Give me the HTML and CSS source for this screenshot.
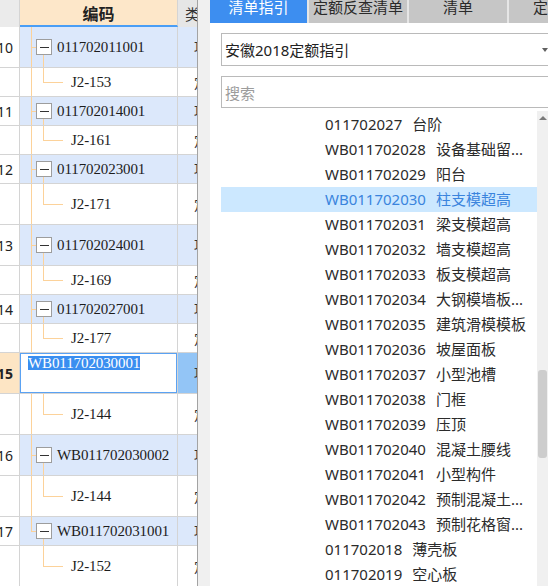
FILE: index.html
```html
<!DOCTYPE html>
<html lang="zh-CN">
<head>
<meta charset="utf-8">
<title>清单指引</title>
<link rel="stylesheet" href="styles.css">
</head>
<body>
<div class="app">
  <div class="grid">
    <div class="row head">
      <div class="num"></div>
      <div class="code">编码</div>
      <div class="type">类</div>
    </div>

    <div class="row tall">
      <div class="num">10</div>
      <div class="code p"><span class="box"></span>011702011001</div>
      <div class="type p">项</div>
    </div>
    <div class="row">
      <div class="num"></div>
      <div class="code c">J2-153</div>
      <div class="type">定</div>
    </div>

    <div class="row">
      <div class="num">11</div>
      <div class="code p"><span class="box"></span>011702014001</div>
      <div class="type p">项</div>
    </div>
    <div class="row">
      <div class="num"></div>
      <div class="code c">J2-161</div>
      <div class="type">定</div>
    </div>

    <div class="row">
      <div class="num">12</div>
      <div class="code p"><span class="box"></span>011702023001</div>
      <div class="type p">项</div>
    </div>
    <div class="row tall">
      <div class="num"></div>
      <div class="code c">J2-171</div>
      <div class="type">定</div>
    </div>

    <div class="row tall">
      <div class="num">13</div>
      <div class="code p"><span class="box"></span>011702024001</div>
      <div class="type p">项</div>
    </div>
    <div class="row">
      <div class="num"></div>
      <div class="code c">J2-169</div>
      <div class="type">定</div>
    </div>

    <div class="row">
      <div class="num">14</div>
      <div class="code p"><span class="box"></span>011702027001</div>
      <div class="type p">项</div>
    </div>
    <div class="row">
      <div class="num"></div>
      <div class="code c">J2-177</div>
      <div class="type">定</div>
    </div>

    <div class="row tall">
      <div class="num cur">15</div>
      <div class="code edit"><span class="sel">WB011702030001</span></div>
      <div class="type cur">项</div>
    </div>
    <div class="row tall">
      <div class="num"></div>
      <div class="code c">J2-144</div>
      <div class="type">定</div>
    </div>

    <div class="row tall">
      <div class="num">16</div>
      <div class="code p"><span class="box"></span>WB011702030002</div>
      <div class="type p">项</div>
    </div>
    <div class="row tall">
      <div class="num"></div>
      <div class="code c">J2-144</div>
      <div class="type">定</div>
    </div>

    <div class="row">
      <div class="num">17</div>
      <div class="code p last"><span class="box"></span>WB011702031001</div>
      <div class="type p">项</div>
    </div>
    <div class="row tall">
      <div class="num"></div>
      <div class="code c last">J2-152</div>
      <div class="type">定</div>
    </div>
  </div>

  <div class="gap"></div>

  <div class="panel">
    <div class="tabs">
      <div class="tab on"><span>清单指引</span></div>
      <div class="tab"><span>定额反查清单</span></div>
      <div class="tab"><span>清单</span></div>
      <div class="tab rest"><span>定额</span></div>
    </div>
    <div class="body">
      <div class="select"><span>安徽2018定额指引</span><i class="caret"></i></div>
      <div class="search">搜索</div>
      <div class="list">
        <div class="items">
          <div class="item">011702027<span class="nm">台阶</span></div>
          <div class="item">WB011702028<span class="nm">设备基础留...</span></div>
          <div class="item">WB011702029<span class="nm">阳台</span></div>
          <div class="item on">WB011702030<span class="nm">柱支模超高</span></div>
          <div class="item">WB011702031<span class="nm">梁支模超高</span></div>
          <div class="item">WB011702032<span class="nm">墙支模超高</span></div>
          <div class="item">WB011702033<span class="nm">板支模超高</span></div>
          <div class="item">WB011702034<span class="nm">大钢模墙板...</span></div>
          <div class="item">WB011702035<span class="nm">建筑滑模模板</span></div>
          <div class="item">WB011702036<span class="nm">坡屋面板</span></div>
          <div class="item">WB011702037<span class="nm">小型池槽</span></div>
          <div class="item">WB011702038<span class="nm">门框</span></div>
          <div class="item">WB011702039<span class="nm">压顶</span></div>
          <div class="item">WB011702040<span class="nm">混凝土腰线</span></div>
          <div class="item">WB011702041<span class="nm">小型构件</span></div>
          <div class="item">WB011702042<span class="nm">预制混凝土...</span></div>
          <div class="item">WB011702043<span class="nm">预制花格窗...</span></div>
          <div class="item">011702018<span class="nm">薄壳板</span></div>
          <div class="item">011702019<span class="nm">空心板</span></div>
        </div>
        <div class="scroll">
          <i class="up"></i>
          <div class="thumb"></div>
        </div>
      </div>
    </div>
  </div>
</div>
</body>
</html>
```

FILE: styles.css
```css
* { box-sizing: border-box; }
html, body { margin: 0; padding: 0; }
body {
  width: 548px;
  height: 586px;
  overflow: hidden;
  background: #f0f0f0;
  font-family: "Noto Sans", "Noto Sans CJK SC", sans-serif;
}
.app { display: flex; height: 586px; overflow: hidden; }

/* ---------- left grid ---------- */
.grid {
  width: 198px;
  flex: none;
  background: #fff;
  border-right: 1px solid #a3a3a3;
  overflow: hidden;
}
.row {
  display: flex;
  height: 29px;
  border-bottom: 1px solid #d4d4d4;
}
.row.tall { height: 41px; }
.row.head { height: 27px; border-bottom: none; }

.num {
  width: 20px;
  flex: none;
  display: flex;
  justify-content: flex-end;
  align-items: center;
  padding-right: 6px;
  border-right: 1px solid #d4d4d4;
  font-size: 14px;
  color: #222;
  white-space: nowrap;
  overflow: hidden;
}
.num.cur { background: #fde5c4; font-weight: bold; }

.code {
  width: 158px;
  flex: none;
  display: flex;
  align-items: center;
  border-right: 1px solid #d4d4d4;
  font-family: "Liberation Serif", serif;
  font-size: 15px;
  letter-spacing: -0.1px;
  color: #1c1c1c;
  white-space: nowrap;
  overflow: hidden;
}
.type {
  width: 19px;
  flex: none;
  display: flex;
  align-items: center;
  padding-left: 16px;
  font-size: 14px;
  color: #333;
  white-space: nowrap;
  overflow: hidden;
}

.head .num { background: #ebebeb; }
.head .code {
  justify-content: center;
  background: #fde7c9;
  border-bottom: 2px solid #4a9ef5;
  font-family: "Noto Sans CJK SC", sans-serif;
  font-weight: bold;
  font-size: 16px;
  letter-spacing: 0;
  color: #222;
}
.head .type { background: #e6e6e6; padding-left: 7px; font-size: 15px; }

/* tree lines */
.code.p {
  padding-left: 16px;
  background-color: #dce8fb;
  background-image:
    linear-gradient(#fcd29a, #fcd29a),
    linear-gradient(#fcd29a, #fcd29a),
    linear-gradient(#fcd29a, #fcd29a);
  background-repeat: no-repeat;
  background-position: 11px 0, 11px 50%, 23px 100%;
  background-size: 1px 100%, 5px 1px, 1px 50%;
}
.code.p.last { background-size: 1px 50%, 5px 1px, 1px 50%; }
.type.p { background: #dce8fb; }

.code.c {
  padding-left: 51px;
  background-image:
    linear-gradient(#fcd29a, #fcd29a),
    linear-gradient(#fcd29a, #fcd29a),
    linear-gradient(#fcd29a, #fcd29a);
  background-repeat: no-repeat;
  background-position: 11px 0, 23px 0, 23px 50%;
  background-size: 1px 100%, 1px 50%, 20px 1px;
}
.code.c.last { background-size: 0 0, 1px 50%, 20px 1px; }

.box {
  width: 16px;
  height: 16px;
  flex: none;
  margin-right: 5px;
  border: 1px solid #9d9d9d;
  background: linear-gradient(#333, #333) center / 9px 1px no-repeat #fff;
}

.code.edit {
  align-items: flex-start;
  padding: 3px 0 0 8px;
  background: #fff;
  box-shadow: inset 0 0 0 1px #5aa2f3;
}
.sel {
  background: #3a8ef0;
  color: #fff;
  line-height: 14px;
}
.type.cur { background: #93c5f6; }

/* ---------- splitter ---------- */
.gap { width: 12px; flex: none; background: #f0f0f0; }

/* ---------- right panel ---------- */
.panel {
  width: 338px;
  flex: none;
  background: #fff;
  overflow: hidden;
}
.tabs {
  display: flex;
  gap: 2px;
  height: 23px;
  background: #e6e6e6;
}
.tab {
  flex: none;
  width: 98px;
  background: #c6c6c6;
  color: #2a2a2a;
  font-family: "Noto Sans CJK SC", sans-serif;
  font-size: 15px;
  line-height: 15px;
  text-align: center;
  white-space: nowrap;
  overflow: hidden;
}
.tab span { display: block; margin-top: -1px; }
.tab.on { width: 97px; background: #3d8ef0; color: #fff; }
.tab.rest { width: 60px; text-align: left; padding-left: 24px; }

.body { padding: 10px 0 0 11px; }
.select {
  width: 340px;
  height: 33px;
  display: flex;
  align-items: center;
  justify-content: space-between;
  padding: 0 12px 0 3px;
  border: 1px solid #bababa;
  font-size: 15px;
  color: #222;
}
.caret {
  width: 0;
  height: 0;
  border-left: 3px solid transparent;
  border-right: 3px solid transparent;
  border-top: 4px solid #606060;
}
.search {
  width: 340px;
  height: 32px;
  margin-top: 10px;
  display: flex;
  align-items: center;
  padding-left: 3px;
  border: 1px solid #bababa;
  font-size: 15px;
  color: #9c9c9c;
}
.list {
  display: flex;
  margin-top: 3px;
  height: 480px;
}
.items { width: 316px; flex: none; padding-top: 1px; }
.item {
  height: 25px;
  line-height: 25px;
  padding-left: 104px;
  font-size: 15px;
  color: #2b2b2b;
  white-space: nowrap;
}
.item .nm { margin-left: 10px; }
.item.on { background: #cce8ff; color: #3a84dd; }

.scroll {
  width: 11px;
  flex: none;
  display: flex;
  flex-direction: column;
  align-items: center;
  background: #f0f0f0;
}
.up {
  margin-top: 5px;
  width: 0;
  height: 0;
  border-left: 4px solid transparent;
  border-right: 4px solid transparent;
  border-bottom: 4px solid #7a7a7a;
}
.thumb {
  width: 9px;
  height: 88px;
  margin-top: 250px;
  background: #cdcdcd;
  border-radius: 3px;
}
```
